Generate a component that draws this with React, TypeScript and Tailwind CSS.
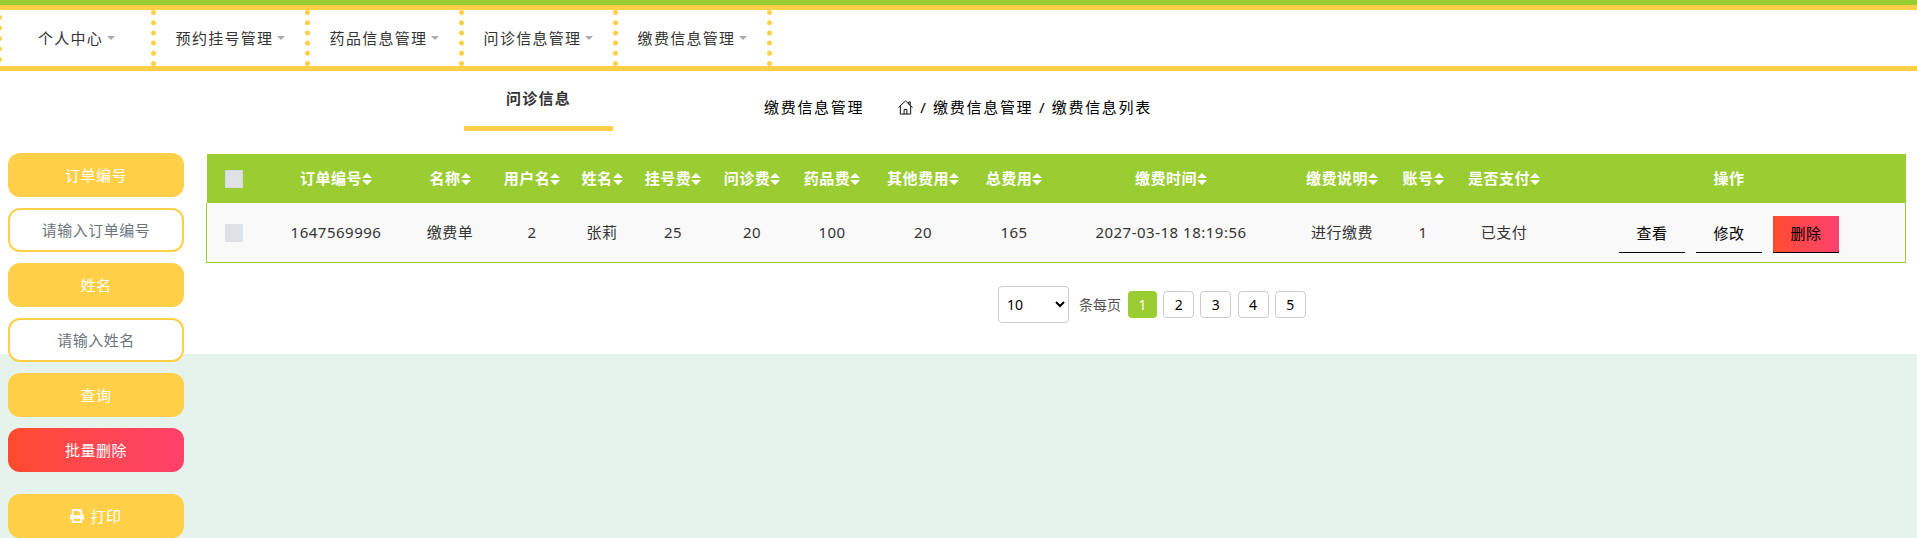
import React from "react";
import { FaPrint } from "react-icons/fa";

const navItems = ["个人中心", "预约挂号管理", "药品信息管理", "问诊信息管理", "缴费信息管理"];

const columns = [
  { label: "订单编号", value: "1647569996", width: "w-[150px]" },
  { label: "名称", value: "缴费单", width: "w-[78px]" },
  { label: "用户名", value: "2", width: "w-[86px]" },
  { label: "姓名", value: "张莉", width: "w-[54px]" },
  { label: "挂号费", value: "25", width: "w-[88px]" },
  { label: "问诊费", value: "20", width: "w-[70px]" },
  { label: "药品费", value: "100", width: "w-[90px]" },
  { label: "其他费用", value: "20", width: "w-[92px]" },
  { label: "总费用", value: "165", width: "w-[90px]" },
  { label: "缴费时间", value: "2027-03-18 18:19:56", width: "w-[224px]" },
  { label: "缴费说明", value: "进行缴费", width: "w-[118px]" },
  { label: "账号", value: "1", width: "w-[44px]" },
  { label: "是否支付", value: "已支付", width: "w-[118px]" },
];

const SortIcon = () => (
  <svg width="10" height="12" viewBox="0 0 10 12" className="shrink-0" fill="currentColor">
    <path d="M5 0 10 5H0zM0 7h10l-5 5z" />
  </svg>
);

const SideButton = ({ children, className = "bg-[#ffd047]" }: { children: React.ReactNode; className?: string }) => (
  <div className={`flex h-11 w-[176px] items-center justify-center rounded-xl text-[15px] tracking-[0.5px] text-white ${className}`}>
    {children}
  </div>
);

const SideInput = ({ placeholder }: { placeholder: string }) => (
  <input
    placeholder={placeholder}
    className="h-11 w-[176px] rounded-xl border-2 border-[#ffd047] bg-white text-center text-[15px] tracking-[0.5px] outline-none placeholder:text-[#6c757d]"
  />
);

const Divider = ({ className = "h-[56px]" }: { className?: string }) => (
  <span className={`w-[5px] shrink-0 border-l-[5px] border-dotted border-[#ffd047] ${className}`} />
);

export default function App() {
  return (
    <div className="min-h-[538px] bg-[#e6f3ec] font-['Noto_Sans','Noto_Sans_CJK_SC',sans-serif] text-[15px] text-[#333]">
      <div className="h-[354px] bg-white">
        <div className="h-[5px] bg-[#9acd32]" />
        <nav className="flex h-[66px] items-center overflow-hidden border-y-[5px] border-[#ffd047] bg-white">
          <Divider className="-ml-[3px] h-[47px]" />
          {navItems.map((item) => (
            <React.Fragment key={item}>
              <div className="flex w-[149px] items-center justify-center tracking-[1.3px]">
                {item}
                <span className="ml-1 h-0 w-0 border-x-4 border-t-4 border-x-transparent border-t-[#aaa]" />
              </div>
              <Divider />
            </React.Fragment>
          ))}
        </nav>

        <div className="flex h-[60px] items-center tracking-[1.7px]">
          <div className="ml-[464px] flex h-[60px] w-[149px] items-center justify-center border-b-[5px] border-[#ffd047] font-bold tracking-[1.3px]">
            问诊信息
          </div>
          <div className="ml-[151px] mt-[13px] text-black">缴费信息管理</div>
          <div className="ml-[34px] mt-[13px] flex items-center gap-[7px] text-black">
            <svg width="15" height="15" viewBox="0 0 16 16" fill="none" stroke="currentColor">
              <path d="M0.5 8 8 1 15.5 8M2.5 6.5V15H13.5V6.5M6.5 15V10H9.5V15M11.5 4.5V2H13V6" />
            </svg>
            <span>/ 缴费信息管理 / 缴费信息列表</span>
          </div>
        </div>

        <div className="flex items-start gap-[22px] pl-2 pr-[11px] pt-[22px]">
          <div className="flex flex-col gap-[11px]">
            <SideButton>订单编号</SideButton>
            <SideInput placeholder="请输入订单编号" />
            <SideButton>姓名</SideButton>
            <SideInput placeholder="请输入姓名" />
            <SideButton>查询</SideButton>
            <SideButton className="bg-gradient-to-r from-[#ff4b2b] to-[#ff416c]">批量删除</SideButton>
            <SideButton className="mt-[11px] gap-[6px] bg-[#ffd047]">
              <FaPrint size={14} />
              打印
            </SideButton>
          </div>

          <div className="mt-px flex-1 tracking-[0.5px]">
            <div className="ml-px flex h-[49px] items-center bg-[#9acd32] font-bold text-white">
              <div className="flex w-[54px] justify-center">
                <span className="h-[18px] w-[18px] border border-[#d5d9e0] bg-[#dee2e6]" />
              </div>
              {columns.map((col) => (
                <div key={col.label} className={`flex items-center justify-center ${col.width}`}>
                  {col.label}
                  <SortIcon />
                </div>
              ))}
              <div className="flex-1 pr-[11px] text-center">操作</div>
            </div>
            <div className="flex h-[60px] items-center border border-t-0 border-[#9acd32] bg-[#f9f9f9]">
              <div className="flex w-[54px] justify-center">
                <span className="h-[18px] w-[18px] bg-[#dee2e6]" />
              </div>
              {columns.map((col) => (
                <div key={col.label} className={`shrink-0 text-center ${col.width}`}>
                  {col.value}
                </div>
              ))}
              <div className="mt-[3px] flex flex-1 justify-center gap-[11px] pr-[10px] text-black">
                <span className="flex h-[37px] w-[66px] items-center justify-center border-b border-black">查看</span>
                <span className="flex h-[37px] w-[66px] items-center justify-center border-b border-black">修改</span>
                <span className="flex h-[37px] w-[66px] items-center justify-center border-b border-black bg-gradient-to-r from-[#ff4b2b] to-[#ff416c]">删除</span>
              </div>
            </div>
            <div className="ml-[792px] mt-[23px] flex items-center text-sm tracking-normal">
              <select className="h-[37px] w-[71px] rounded border border-[#ccc] bg-white px-1 text-black">
                <option>10</option>
                <option>20</option>
              </select>
              <span className="ml-[10px] mr-[7px] text-[#555]">条每页</span>
              <div className="flex gap-[6.2px]">
                {[1, 2, 3, 4, 5].map((n) => (
                  <span
                    key={n}
                    className={
                      n === 1
                        ? "flex h-[27px] w-[29px] items-center justify-center rounded bg-[#9acd32] text-white"
                        : "flex h-[27px] w-[31px] items-center justify-center rounded border border-[#ccc] text-black"
                    }
                  >
                    {n}
                  </span>
                ))}
              </div>
            </div>
          </div>
        </div>
      </div>
    </div>
  );
}
